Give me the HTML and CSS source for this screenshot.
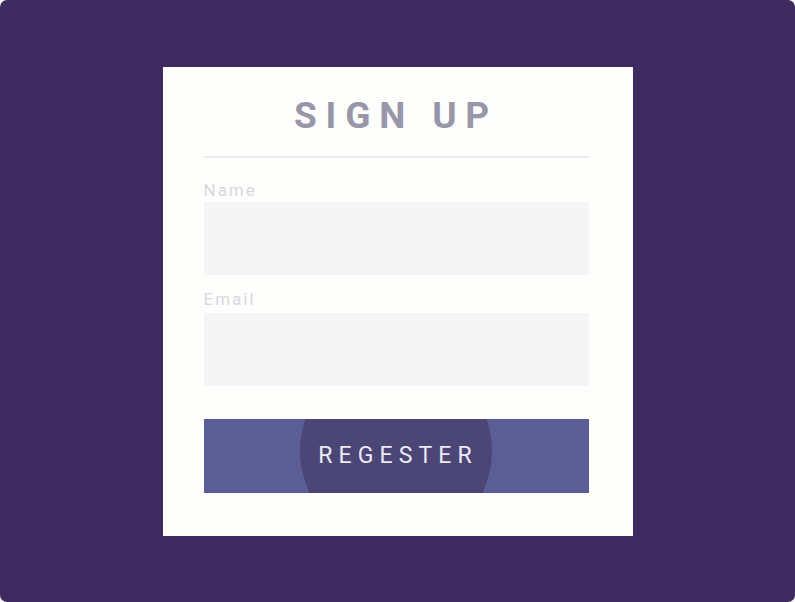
FILE: index.html
```html
<!DOCTYPE html>
<html>
<head>
<meta charset="utf-8">
<link rel="stylesheet" href="styles.css">
</head>
<body>
<div class="screen">
  <form class="card">
    <h1 class="title">SIGN UP</h1>
    <div class="divider"></div>
    <div class="field field-first">
      <label class="label">Name</label>
      <div class="input"></div>
    </div>
    <div class="field field-second">
      <label class="label">Email</label>
      <div class="input"></div>
    </div>
    <button type="button" class="btn"><span class="btn-text">REGESTER</span></button>
  </form>
</div>
</body>
</html>
```
FILE: styles.css
```css
html, body {
  margin: 0;
  padding: 0;
  background: #ffffff;
}
.screen {
  width: 795px;
  height: 602px;
  background: #3e2a5e;
  border-radius: 7px;
  display: flex;
  align-items: center;
  justify-content: center;
  font-family: Roboto, "Liberation Sans", sans-serif;
}
.card {
  width: 470px;
  height: 469px;
  box-sizing: border-box;
  background: #fefefd;
  padding: 27px 44px 0 41px;
  display: flex;
  flex-direction: column;
}
.title {
  margin: 0;
  font-size: 37px;
  line-height: 44px;
  height: 44px;
  font-weight: 700;
  letter-spacing: 8.8px;
  text-align: center;
  color: #9797a9;
}
.divider {
  margin-top: 18px;
  height: 2px;
  background: #e9e9ee;
}
.field {
  display: flex;
  flex-direction: column;
}
.field-first {
  margin-top: 22px;
}
.field-second {
  margin-top: 14px;
}
.label {
  font-size: 17px;
  line-height: 20px;
  height: 20px;
  letter-spacing: 2px;
  color: #d9d8e0;
  font-weight: 400;
  margin-bottom: 2px;
}
.field-second .label {
  margin-bottom: 4px;
}
.input {
  height: 73px;
  background: #f5f5f5;
}
.btn {
  margin-top: 33px;
  height: 74px;
  border: none;
  padding: 0 0 0 4px;
  background: #5b5e95;
  position: relative;
  overflow: hidden;
  cursor: pointer;
  font-family: inherit;
}
.btn::before {
  content: "";
  position: absolute;
  left: 50%;
  top: 32px;
  width: 192px;
  height: 192px;
  margin-left: -96px;
  margin-top: -96px;
  border-radius: 50%;
  background: #4b4676;
}
.btn-text {
  position: relative;
  font-size: 23px;
  letter-spacing: 6.1px;
  color: #ecebf5;
}
```
